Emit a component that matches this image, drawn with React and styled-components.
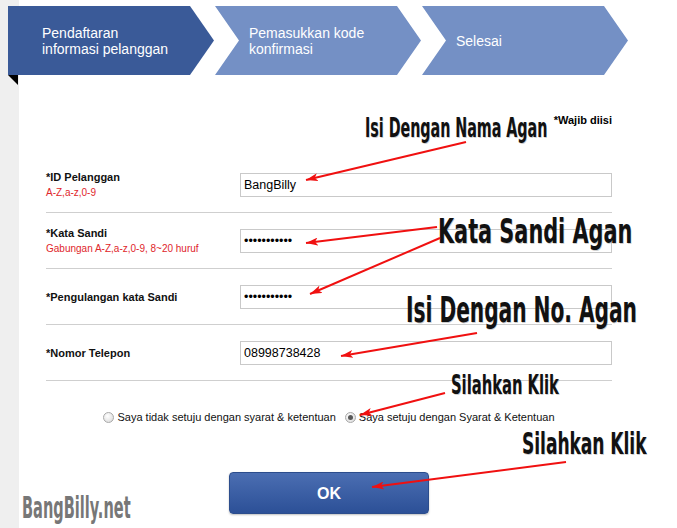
import React from 'react';
import styled, { createGlobalStyle, css } from 'styled-components';

const GlobalStyle = createGlobalStyle`
  html, body {
    margin: 0;
    padding: 0;
  }
  body {
    background: linear-gradient(to right, #efefef 0, #efefef 19px, #ffffff 19px);
    font-family: "Liberation Sans", Arial, sans-serif;
  }
`;

const Page = styled.div`
  position: relative;
  width: 677px;
  height: 528px;
  overflow: hidden;
  box-sizing: border-box;
  padding-top: 6px;
`;

const Steps = styled.div`
  position: relative;
  display: flex;
  margin-left: 8px;

  &::after {
    content: '';
    position: absolute;
    left: 0;
    top: 69px;
    width: 0;
    height: 0;
    border-top: 10px solid #000;
    border-left: 10px solid transparent;
  }
`;

const Step = styled.div`
  width: 207px;
  height: 69px;
  box-sizing: border-box;
  padding-left: 34px;
  display: flex;
  align-items: center;
  color: #fff;
  font-size: 14px;
  line-height: 16px;
  background: ${(p) => (p.$active ? '#3a5a98' : '#7490c5')};
  clip-path: ${(p) =>
    p.$first
      ? 'polygon(0 0, calc(100% - 25px) 0, calc(100% - 1px) 50%, calc(100% - 25px) 100%, 0 100%)'
      : 'polygon(0 0, calc(100% - 25px) 0, calc(100% - 1px) 50%, calc(100% - 25px) 100%, 0 100%, 24px 50%)'};
`;

const Form = styled.div`
  width: 566px;
  margin-left: 46px;
`;

const Required = styled.div`
  margin: 39px 0 30px;
  text-align: right;
  font-size: 11px;
  line-height: 13px;
  font-weight: bold;
  color: #000;
`;

const Row = styled.div`
  display: flex;
  align-items: center;
  height: 56px;
  box-sizing: border-box;
  padding-top: 1px;
  border-bottom: 1px solid #cfcfcf;
`;

const LabelCol = styled.div`
  width: 194px;
`;

const Label = styled.div`
  font-size: 11px;
  line-height: 15px;
  font-weight: bold;
  color: #111;
`;

const Hint = styled.div`
  font-size: 10px;
  line-height: 15px;
  color: #e0262b;
`;

const Input = styled.input`
  width: 372px;
  height: 24px;
  box-sizing: border-box;
  margin: 0;
  padding: 0 3px;
  border: 1px solid #c9c9c9;
  font-family: "Liberation Sans", Arial, sans-serif;
  font-size: 12.5px;
  color: #000;
  background: #fff;
  outline: none;
`;

const RadioRow = styled.div`
  display: flex;
  justify-content: center;
  align-items: center;
  gap: 9px;
  margin-top: 30px;
  font-size: 11px;
  line-height: 13px;
  color: #111;
`;

const Choice = styled.label`
  display: flex;
  align-items: center;
  gap: 3px;
`;

const Radio = styled.span`
  display: inline-flex;
  align-items: center;
  justify-content: center;
  width: 11px;
  height: 11px;
  box-sizing: border-box;
  border-radius: 50%;
  border: 1px solid #a9a9a9;
  background: radial-gradient(circle at 40% 35%, #ffffff, #d6d6d6);

  ${(p) =>
    p.$checked &&
    css`
      &::after {
        content: '';
        width: 5px;
        height: 5px;
        border-radius: 50%;
        background: #585858;
      }
    `}
`;

const OkButton = styled.button`
  display: block;
  width: 200px;
  height: 42px;
  margin: 48px auto 0;
  border: 1px solid #2c4d8c;
  border-radius: 4px;
  background: linear-gradient(to bottom, #4b6eb2, #2c5097);
  box-shadow: 0 1px 2px rgba(0, 0, 0, 0.25);
  color: #fff;
  font-family: "Liberation Sans", Arial, sans-serif;
  font-size: 16px;
  font-weight: bold;
  padding-top: 3px;
`;

const Overlay = styled.svg`
  position: absolute;
  left: 0;
  top: 0;
  pointer-events: none;
`;

const Note = styled.div`
  position: absolute;
  left: ${(p) => p.$x}px;
  top: ${(p) => p.$y}px;
  font-family: "DejaVu Sans Condensed", "DejaVu Sans", sans-serif;
  font-weight: bold;
  font-size: ${(p) => p.$size}px;
  line-height: 1;
  white-space: nowrap;
  color: ${(p) => (p.$muted ? '#777777' : '#111')};
  text-shadow: ${(p) => (p.$muted ? 'none' : '1px 1px 0 rgba(0, 0, 0, 0.2)')};
  transform: scaleX(${(p) => p.$sx});
  transform-origin: left top;
`;

const arrows = [
  [466, 142, 306, 180],
  [437, 227, 306, 243],
  [440, 238, 310, 294],
  [477, 333, 341, 356],
  [445, 393, 360, 415],
  [566, 462, 372, 487],
];

const notes = [
  { text: 'Isi Dengan Nama Agan', x: 365, y: 115, size: 26, sx: 0.61 },
  { text: 'Kata Sandi Agan', x: 438, y: 214, size: 34, sx: 0.68 },
  { text: 'Isi Dengan No. Agan', x: 406, y: 293, size: 35, sx: 0.64 },
  { text: 'Silahkan Klik', x: 451, y: 372, size: 26, sx: 0.63 },
  { text: 'Silahkan Klik', x: 522, y: 428, size: 31, sx: 0.61 },
];

export default function App() {
  return (
    <>
      <GlobalStyle />
      <Page>
        <Steps>
          <Step $active $first>Pendaftaran<br />informasi pelanggan</Step>
          <Step>Pemasukkan kode<br />konfirmasi</Step>
          <Step>Selesai</Step>
        </Steps>

        <Form>
          <Required>*Wajib diisi</Required>

          <Row>
            <LabelCol>
              <Label>*ID Pelanggan</Label>
              <Hint>A-Z,a-z,0-9</Hint>
            </LabelCol>
            <Input type="text" defaultValue="BangBilly" />
          </Row>
          <Row>
            <LabelCol>
              <Label>*Kata Sandi</Label>
              <Hint>Gabungan A-Z,a-z,0-9, 8~20 huruf</Hint>
            </LabelCol>
            <Input type="password" defaultValue="bangbilly12" />
          </Row>
          <Row>
            <LabelCol>
              <Label>*Pengulangan kata Sandi</Label>
            </LabelCol>
            <Input type="password" defaultValue="bangbilly12" />
          </Row>
          <Row>
            <LabelCol>
              <Label>*Nomor Telepon</Label>
            </LabelCol>
            <Input type="text" defaultValue="08998738428" />
          </Row>

          <RadioRow>
            <Choice>
              <Radio />
              Saya tidak setuju dengan syarat &amp; ketentuan
            </Choice>
            <Choice>
              <Radio $checked />
              Saya setuju dengan Syarat &amp; Ketentuan
            </Choice>
          </RadioRow>

          <OkButton type="button">OK</OkButton>
        </Form>

        {notes.map((n, i) => (
          <Note key={i} $x={n.x} $y={n.y} $size={n.size} $sx={n.sx}>
            {n.text}
          </Note>
        ))}
        <Note $x={22} $y={493} $size={30} $sx={0.54} $muted>
          BangBilly.net
        </Note>

        <Overlay width="677" height="528" viewBox="0 0 677 528">
          <defs>
            <marker
              id="head"
              markerUnits="userSpaceOnUse"
              markerWidth="13"
              markerHeight="8"
              refX="12"
              refY="4"
              orient="auto"
            >
              <path d="M0,0 L12,4 L0,8 L3,4 z" fill="#f01010" />
            </marker>
          </defs>
          {arrows.map(([x1, y1, x2, y2], i) => (
            <line
              key={i}
              x1={x1}
              y1={y1}
              x2={x2}
              y2={y2}
              stroke="#f01010"
              strokeWidth="2"
              markerEnd="url(#head)"
            />
          ))}
        </Overlay>
      </Page>
    </>
  );
}
